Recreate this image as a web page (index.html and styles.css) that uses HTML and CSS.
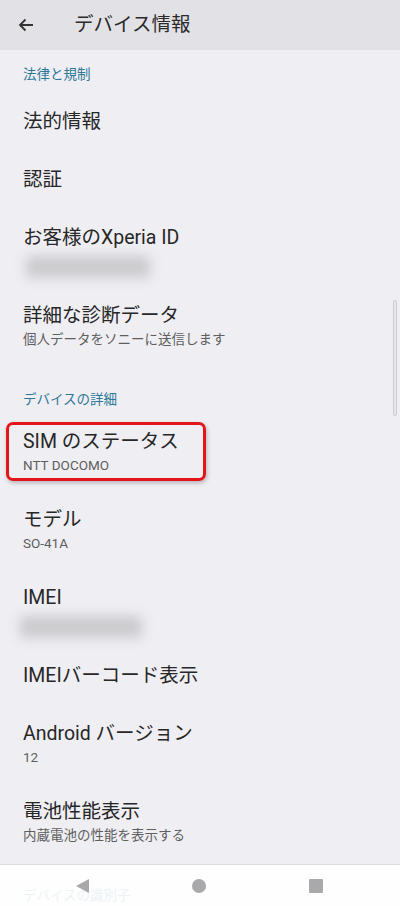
FILE: index.html
```html
<!DOCTYPE html>
<html lang="ja">
<head>
  <meta charset="UTF-8">
  <title>デバイス情報</title>
  <link rel="stylesheet" href="styles.css">
</head>
<body>
  <div class="screen">
    <header class="topbar">
      <svg class="back" width="16" height="14" viewBox="0 0 16 14">
        <path d="M15 7H2M7.5 1.5L2 7l5.5 5.5" fill="none" stroke="#333" stroke-width="1.8"/>
      </svg>
      <span class="title">デバイス情報</span>
    </header>

    <div class="list">
      <div class="category first">法律と規制</div>
      <div class="item single"><div class="label">法的情報</div></div>
      <div class="item single"><div class="label">認証</div></div>
      <div class="item">
        <div class="label">お客様のXperia ID</div>
        <div class="blur xperia"></div>
      </div>
      <div class="item">
        <div class="label">詳細な診断データ</div>
        <div class="sub">個人データをソニーに送信します</div>
      </div>

      <div class="category">デバイスの詳細</div>
      <div class="item marked">
        <div class="label">SIM のステータス</div>
        <div class="sub">NTT DOCOMO</div>
        <div class="highlight"></div>
      </div>
      <div class="item">
        <div class="label">モデル</div>
        <div class="sub">SO-41A</div>
      </div>
      <div class="item">
        <div class="label">IMEI</div>
        <div class="blur imei"></div>
      </div>
      <div class="item single"><div class="label">IMEIバーコード表示</div></div>
      <div class="item">
        <div class="label">Android バージョン</div>
        <div class="sub">12</div>
      </div>
      <div class="item">
        <div class="label">電池性能表示</div>
        <div class="sub">内蔵電池の性能を表示する</div>
      </div>
      <div class="category">デバイスの識別子</div>
    </div>

    <div class="scrollbar"></div>

    <nav class="navbar">
      <svg width="16" height="16" viewBox="0 0 16 16"><path d="M15 1v14L2 8z" fill="#a9a9ab"/></svg>
      <svg width="16" height="16" viewBox="0 0 16 16"><circle cx="8" cy="8" r="7" fill="#a9a9ab"/></svg>
      <svg width="16" height="16" viewBox="0 0 16 16"><rect x="1" y="1" width="14" height="14" rx="1" fill="#a9a9ab"/></svg>
    </nav>
  </div>
</body>
</html>
```

FILE: styles.css
```css
* {
  box-sizing: border-box;
}

body {
  margin: 0;
  font-family: Roboto, "Noto Sans CJK JP", sans-serif;
  background: #efeef3;
  color: #252525;
}

.screen {
  position: relative;
  width: 400px;
  height: 906px;
  overflow: hidden;
  background: #efeef3;
}

.topbar {
  height: 50px;
  background: #e2e2e6;
  display: flex;
  align-items: center;
  padding-left: 18px;
}

.back {
  margin-right: 40px;
}

.title {
  font-size: 19.5px;
  color: #2a2a2a;
  line-height: 1;
}

.list {
  display: flex;
  flex-direction: column;
}

.category {
  height: 48px;
  padding: 25px 0 0 23px;
  font-size: 13.5px;
  line-height: 20px;
  color: #2d7797;
}

.category.first {
  height: 42px;
  padding-top: 14px;
}

.item {
  position: relative;
  height: 78px;
  padding: 16px 0 0 23px;
}

.item.single {
  height: 58px;
}

.label {
  font-size: 19.5px;
  line-height: 28px;
  color: #272727;
}

.sub {
  font-size: 13.5px;
  line-height: 18px;
  color: #5e5e5e;
}

.blur {
  position: absolute;
  background: #cbcbce;
  filter: blur(6px);
  border-radius: 4px;
}

.blur.xperia {
  left: 26px;
  top: 48px;
  width: 124px;
  height: 22px;
}

.blur.imei {
  left: 20px;
  top: 48px;
  width: 122px;
  height: 22px;
}

.highlight {
  position: absolute;
  left: 6px;
  top: 10px;
  width: 200px;
  height: 59px;
  border: 3px solid #e3151b;
  border-radius: 7px;
  box-shadow: 1px 2px 4px rgba(0, 0, 0, 0.25);
}

.scrollbar {
  position: absolute;
  right: 3px;
  top: 300px;
  width: 4px;
  height: 116px;
  background: #e6e6ea;
  border: 1px solid #cfcfd3;
  border-radius: 2px;
}

.navbar {
  position: absolute;
  left: 0;
  right: 0;
  bottom: 0;
  height: 42px;
  background: rgba(255, 255, 255, 0.9);
  border-top: 1px solid #dcdcdf;
  display: flex;
  align-items: center;
  justify-content: space-between;
  padding: 0 76px 0 74px;
}
```
